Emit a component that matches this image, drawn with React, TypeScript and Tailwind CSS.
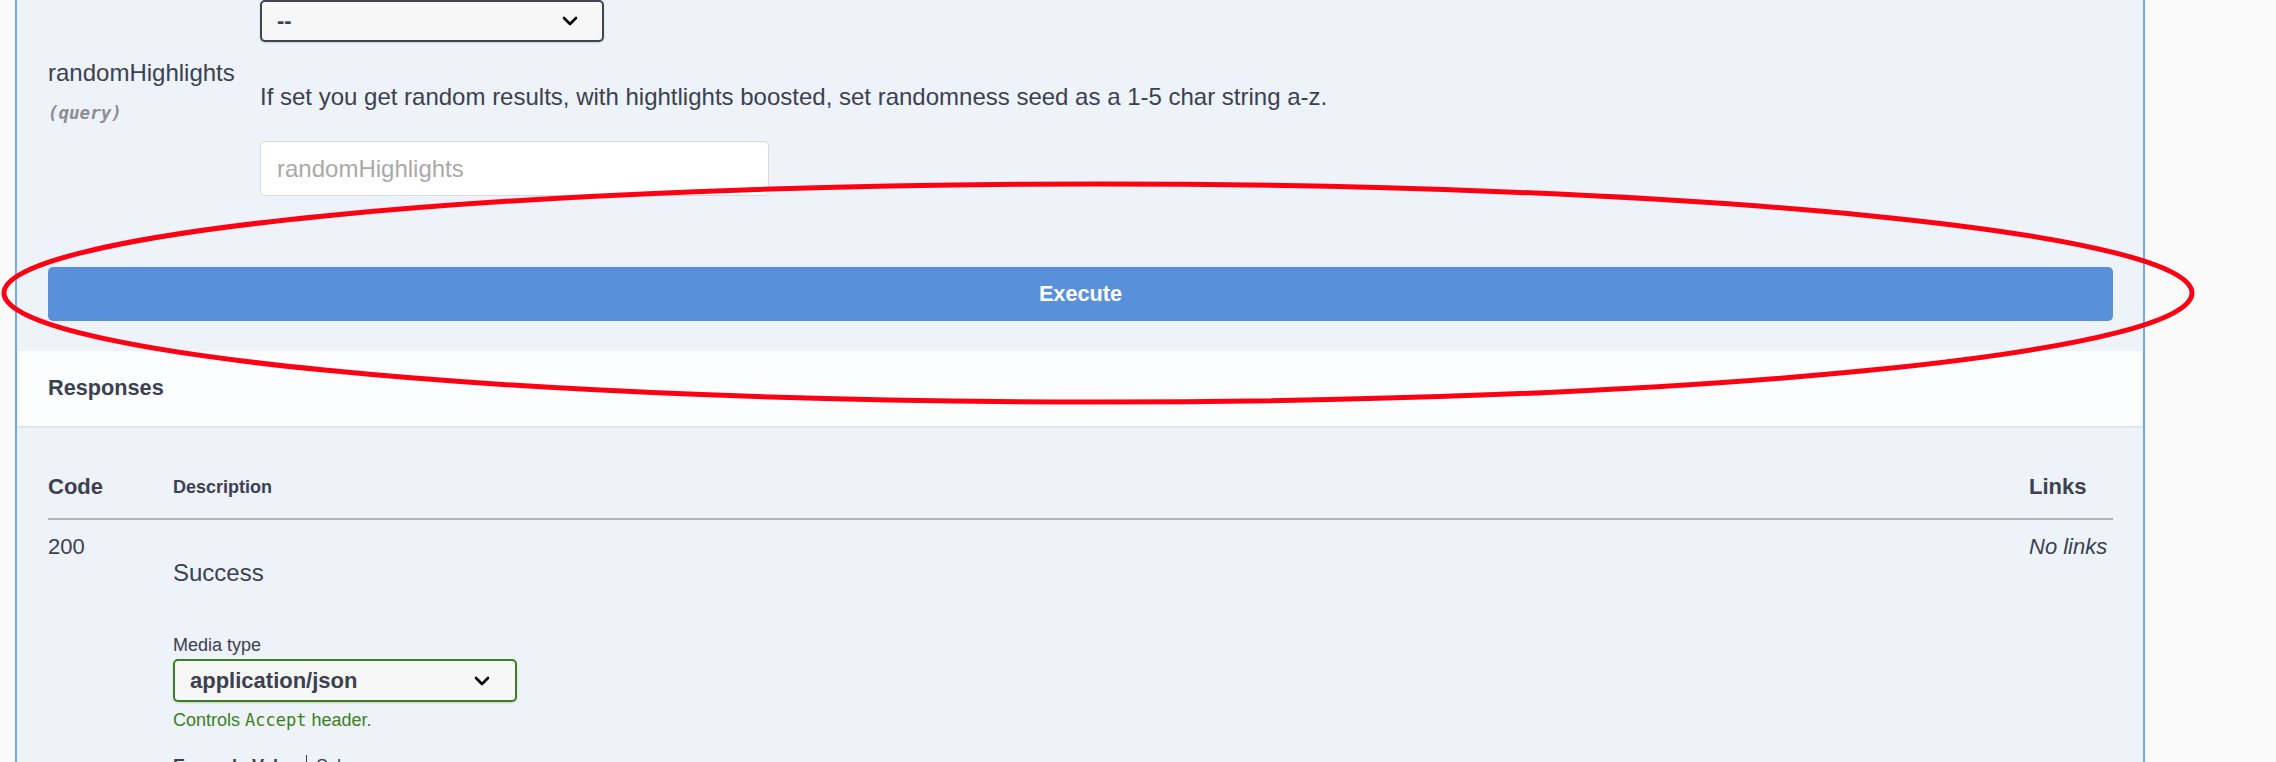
import React from 'react';

function Chevron() {
  return (
    <svg width="16" height="10" viewBox="0 0 16 10" className="shrink-0">
      <path d="M2 2l6 6 6-6" fill="none" stroke="#000" strokeWidth="2.6" strokeLinecap="round" strokeLinejoin="round" />
    </svg>
  );
}

function ParamSection() {
  return (
    <div className="bg-[#eef2f9] pl-[31px] pr-[30px] pb-[30px]">
      {/* tail of the previous parameter */}
      <div className="flex">
        <div className="w-[212px] shrink-0" />
        <div className="w-[344px] h-[42px] flex items-center justify-between pl-[15px] pr-[24px] bg-[#f7f7f7] border-2 border-[#41444e] rounded-[5px] shadow-[0_1px_2px_rgba(0,0,0,0.15)]">
          <span className="text-[22px] font-bold text-[#3b4151] leading-none">--</span>
          <Chevron />
        </div>
      </div>

      <div className="flex mt-[17px]">
        <div className="w-[212px] shrink-0">
          <div className="text-[24px] leading-[28px] text-[#3b4151]">randomHighlights</div>
          <div className="mt-[15px] text-[17.5px] leading-[22px] italic font-semibold text-[#8c8d92] font-['DejaVu_Sans_Mono',monospace]">
            (query)
          </div>
        </div>
        <div className="flex-1">
          <p className="mt-[24px] text-[24px] leading-[28px] text-[#3b4151]">
            If set you get random results, with hightlights boosted, set randomness seed as a 1-5 char string a-z.
          </p>
          <input
            className="mt-[30px] block w-[509px] h-[55px] bg-white border border-[#d9d9d9] rounded-[5px] pl-[16px] text-[24px] text-[#3b4151] placeholder:text-[#a9a9a9] outline-none"
            placeholder="randomHighlights"
          />
        </div>
      </div>

      <button className="mt-[71px] w-full h-[54px] rounded-[5px] bg-[#5891da] text-white text-[21.7px] font-bold">
        Execute
      </button>
    </div>
  );
}

function ResponsesHeader() {
  return (
    <div className="relative z-10 h-[75px] flex items-center pl-[31px] bg-[#fcfdfe] shadow-[0_1px_2px_rgba(0,0,0,0.1)]">
      <h4 className="text-[21.7px] font-bold text-[#3b4151]">Responses</h4>
    </div>
  );
}

function ResponsesTable() {
  return (
    <div className="bg-[#eef2f9] pl-[31px] pr-[30px] pt-[48px] text-[#3b4151]">
      <div className="flex pb-[18px] border-b-2 border-[#b1b4bb] font-bold">
        <div className="w-[125px] shrink-0 text-[22px] leading-[26px]">Code</div>
        <div className="flex-1 text-[18px] leading-[26px]">Description</div>
        <div className="w-[84px] shrink-0 text-[22px] leading-[26px]">Links</div>
      </div>

      <div className="flex pt-[14px]">
        <div className="w-[125px] shrink-0 text-[22px] leading-[26px]">200</div>
        <div className="flex-1">
          <div className="mt-[25px] text-[24px] leading-[28px]">Success</div>
          <div className="mt-[47px] text-[18px] leading-[22px]">Media type</div>
          <div className="mt-[3px] w-[344px] h-[43px] flex items-center justify-between pl-[15px] pr-[25px] bg-[#f7f7f7] border-2 border-[#3d8023] rounded-[5px] shadow-[0_1px_2px_rgba(0,0,0,0.15)]">
            <span className="text-[22px] font-bold leading-none">application/json</span>
            <Chevron />
          </div>
          <div className="mt-[7px] text-[18px] leading-[22px] text-[#3b8022]">
            Controls <span className="font-['DejaVu_Sans_Mono',monospace] text-[17px]">Accept</span> header.
          </div>
          <div className="mt-[24px] flex items-center text-[18px] leading-[22px]">
            <span className="font-bold pr-[7px] border-r border-[#3b4151]">Example Value</span>
            <span className="pl-[9px]">Schema</span>
          </div>
        </div>
        <div className="w-[84px] shrink-0 text-[22px] leading-[26px] italic">No links</div>
      </div>
    </div>
  );
}

export default function App() {
  return (
    <div className="relative w-[2276px] h-[762px] overflow-hidden bg-[#fafafa] font-['Liberation_Sans',Arial,sans-serif]">
      <div className="ml-[15px] w-[2130px] h-full border-l-2 border-r-2 border-[#6eaaf5] bg-[#eef2f9]">
        <ParamSection />
        <ResponsesHeader />
        <ResponsesTable />
      </div>

      {/* red annotation drawn over the screenshot */}
      <svg className="absolute top-0 left-0 z-20 pointer-events-none" width="2276" height="762">
        <ellipse cx="1098" cy="293" rx="1094" ry="109" fill="none" stroke="#fe0012" strokeWidth="5" />
      </svg>
    </div>
  );
}
